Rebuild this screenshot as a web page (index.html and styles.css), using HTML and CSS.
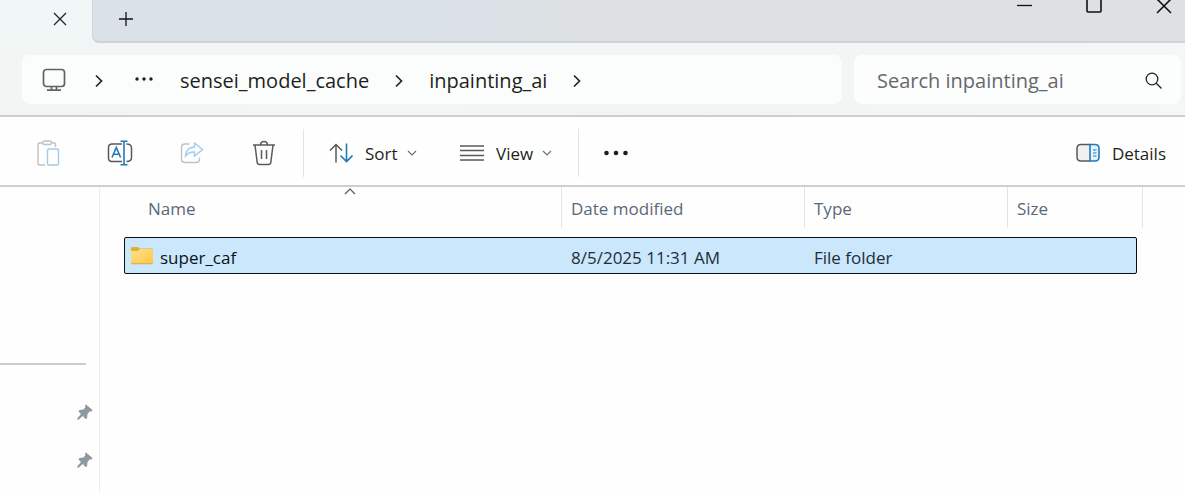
FILE: index.html
```html
<!DOCTYPE html>
<html lang="en">
<head>
<meta charset="utf-8">
<meta name="viewport" content="width=device-width, initial-scale=1">
<title>inpainting_ai</title>
<link rel="stylesheet" href="styles.css">
</head>
<body>
<header class="titlebar">
  <div class="tab">
    <button class="icon-btn" type="button" aria-label="Close tab"><svg width="14" height="14" viewBox="0 0 14 14"><path d="M1 1l12 12M13 1L1 13"/></svg></button>
  </div>
  <div class="strip">
    <button class="icon-btn" type="button" aria-label="New tab"><svg width="16" height="16" viewBox="0 0 16 16"><path d="M8 1v14M1 8h14"/></svg></button>
    <div class="window-controls">
      <button class="icon-btn" type="button" aria-label="Minimize"><svg width="16" height="16" viewBox="0 0 16 16"><path d="M1 7.500h15"/></svg></button>
      <button class="icon-btn" type="button" aria-label="Maximize"><svg class="bold" width="16" height="16" viewBox="0 0 16 16"><rect x="1" y="0" width="14" height="14" rx="1"/></svg></button>
      <button class="icon-btn" type="button" aria-label="Close"><svg class="bold" width="16" height="16" viewBox="0 0 16 16"><path d="M1 1l14 14M15 1L1 15"/></svg></button>
    </div>
  </div>
</header>

<div class="navbar">
  <nav class="address" aria-label="Address">
    <button class="icon-btn pc" type="button" aria-label="This PC"><svg width="24" height="24" viewBox="0 0 24 24"><rect x="1.500" y="1.500" width="21" height="17" rx="3"/><path d="M9.500 19v3M14.500 19v3M5 22.200h14"/></svg></button>
    <svg class="crumb-arrow first" width="8" height="14" viewBox="0 0 8 14"><path d="M1 1.500l5.500 5.500L1 12.500"/></svg>
    <button class="icon-btn dots" type="button" aria-label="More locations"><svg width="18" height="4" viewBox="0 0 18 4"><circle cx="2" cy="2" r="1.700"/><circle cx="9" cy="2" r="1.700"/><circle cx="16" cy="2" r="1.700"/></svg></button>
    <a class="crumb" href="#sensei">sensei_model_cache</a>
    <svg class="crumb-arrow" width="8" height="14" viewBox="0 0 8 14"><path d="M1 1.500l5.500 5.500L1 12.500"/></svg>
    <a class="crumb" href="#inpainting">inpainting_ai</a>
    <svg class="crumb-arrow" width="8" height="14" viewBox="0 0 8 14"><path d="M1 1.500l5.500 5.500L1 12.500"/></svg>
  </nav>
  <form class="search">
    <input type="search" aria-label="Search inpainting_ai" placeholder="Search inpainting_ai">
    <button class="icon-btn" type="button" aria-label="Search"><svg width="18" height="18" viewBox="0 0 18 18"><circle cx="7" cy="7" r="5.800"/><path d="M11.300 11.300l5.200 5.200"/></svg></button>
  </form>
</div>

<div class="toolbar" role="toolbar" aria-label="Commands">
  <button class="tool" type="button" aria-label="Paste" disabled>
    <svg width="24" height="26" viewBox="0 0 24 26"><path class="faint" d="M6.500 3H3.500Q2 3 2 4.500v19Q2 25 3.500 25H9M16 3h2q1.500 0 1.500 1.500V7"/><rect class="faint" x="6.500" y="1" width="9" height="3.500" rx="1.700"/><rect class="faint-blue" x="11.500" y="9" width="11" height="16" rx="1.500"/></svg>
  </button>
  <button class="tool" type="button" aria-label="Rename">
    <svg width="26" height="26" viewBox="0 0 26 26"><path class="grey" d="M15 4H5Q1.500 4 1.500 7.500v10.500Q1.500 21.500 5 21.500h10M19.500 4Q24.500 4 24.500 8v9.500Q24.500 21.500 19.500 21.500"/><path class="blue" d="M5 17.500L9.300 7.500l4.300 10M6.500 14.300h5.600M17 1.500v23M13.500 1.200h7M13.500 24.800h7"/></svg>
  </button>
  <button class="tool" type="button" aria-label="Share" disabled>
    <svg width="24" height="24" viewBox="0 0 24 24"><path class="faint" d="M9.500 3H5Q1.500 3 1.500 6.500V18Q1.500 21.500 5 21.500h11q3.500 0 3.500-3.500v-1.500"/><path class="faint-blue" d="M14.500 2l8 6.500-8 6.500v-4Q9 10.500 5.500 15 6 6.500 14.500 6z"/></svg>
  </button>
  <button class="tool" type="button" aria-label="Delete">
    <svg width="24" height="26" viewBox="0 0 24 26"><path class="grey" d="M1 5h22M8.500 4.500Q9 1.500 12 1.500t3.500 3M3 5l2.200 17.500Q5.500 24.500 7.500 24.500h9Q18.500 24.500 18.800 22.500L21 5M9.500 10v9M14.500 10v9"/></svg>
  </button>
  <span class="divider"></span>
  <button class="menu sort" type="button" aria-haspopup="menu">
    <svg width="24" height="20" viewBox="0 0 24 20"><path class="grey" d="M7 19.500V1.500M1 7.500l6-6 6 6"/><path class="blue" d="M17.500 .5v18M11.500 12.500l6 6 6-6"/></svg>
    <span>Sort</span>
    <svg class="caret" width="10" height="6" viewBox="0 0 10 6"><path d="M1 1l4 4 4-4"/></svg>
  </button>
  <button class="menu view" type="button" aria-haspopup="menu">
    <svg width="24" height="16" viewBox="0 0 24 16"><path class="grey" d="M0 1h24M0 5.500h24M0 10.500h24M0 15h24"/></svg>
    <span>View</span>
    <svg class="caret" width="10" height="6" viewBox="0 0 10 6"><path d="M1 1l4 4 4-4"/></svg>
  </button>
  <span class="divider"></span>
  <button class="icon-btn more" type="button" aria-label="See more"><svg width="24" height="6" viewBox="0 0 24 6"><circle cx="2.500" cy="3" r="2.300"/><circle cx="12" cy="3" r="2.300"/><circle cx="21.500" cy="3" r="2.300"/></svg></button>
  <button class="menu details" type="button">
    <svg width="24" height="20" viewBox="0 0 24 20"><path class="grey pane" d="M14 1.500H5Q1 1.500 1 5.500v8.500Q1 18 5 18h9"/><path class="blue tint" d="M14 1.500h5q4 0 4 4v8.500Q23 18 19 18h-5z"/><path class="blue thin" d="M17 7h3.500M17 10h3.500M17 13h3.500"/></svg>
    <span>Details</span>
  </button>
</div>

<div class="body">
  <aside class="sidebar">
    <hr>
    <svg class="pin" width="16" height="16" viewBox="0 0 16 16"><path d="M9 0.500L15.500 6l-1 1.500h-2L10.500 10l-.5 4.500-1.500 .5L5.800 12 1.500 15.800 0 15.500 .5 14 4 10 1.500 7.500 2.500 6 6.500 5.500 8.200 3.500V1z"/></svg>
    <svg class="pin" width="16" height="16" viewBox="0 0 16 16"><path d="M9 0.500L15.500 6l-1 1.500h-2L10.500 10l-.5 4.500-1.500 .5L5.800 12 1.500 15.800 0 15.500 .5 14 4 10 1.500 7.500 2.500 6 6.500 5.500 8.200 3.500V1z"/></svg>
  </aside>
  <main class="files">
    <table class="list">
      <thead>
        <tr>
          <th class="name" scope="col" aria-sort="ascending">Name<svg class="sorted" width="14" height="7" viewBox="0 0 14 7"><path d="M2 6l5-5 5 5"/></svg></th>
          <th scope="col">Date modified</th>
          <th scope="col">Type</th>
          <th scope="col">Size</th>
        </tr>
      </thead>
      <tbody>
        <tr class="selected">
          <td class="name"><svg class="folder" width="24" height="18" viewBox="0 0 24 18"><defs><linearGradient id="folder" x1="0" y1="0" x2="1" y2="1"><stop offset="0" stop-color="#ffe093"/><stop offset="1" stop-color="#fbc83f"/></linearGradient></defs><path fill="#e0b02f" d="M1 1Q1 0 2 0h5.500L9.500 1.500H22q1 0 1 1V10H1z"/><path fill="url(#folder)" d="M1 4h7l2-2h12q1 0 1 1v13.500q0 .5-.5 .5h-21Q1 17 1 16.500z"/><path fill="#e3b04a" d="M1 16h22q0 1.300-1 1.300H2q-1 0-1-1.300z"/></svg>super_caf</td>
          <td>8/5/2025 11:31 AM</td>
          <td>File folder</td>
          <td></td>
        </tr>
      </tbody>
    </table>
  </main>
</div>
</body>
</html>
```
FILE: styles.css
```css
* { box-sizing: border-box; }

body {
  display: flex;
  flex-direction: column;
  min-height: 100vh;
  margin: 0;
  overflow: hidden;
  background: #fefefe;
  color: #1d1f20;
  font-family: "Open Sans", "Noto Sans", sans-serif;
  font-size: 17px;
}

button {
  display: flex;
  align-items: center;
  justify-content: center;
  margin: 0;
  padding: 0;
  border: 0;
  background: none;
  color: inherit;
  font: inherit;
}

svg {
  flex: none;
  display: block;
  fill: none;
  stroke: #222526;
  stroke-width: 1.3;
}

.titlebar {
  display: flex;
  height: 43px;
  background: #f1f6f6;
}

.tab {
  display: flex;
  width: 92px;
  padding: 7px 20px 12px;
  justify-content: flex-end;
}

.tab .icon-btn { width: 24px; }

.strip {
  display: flex;
  flex: 1;
  align-items: flex-start;
  justify-content: space-between;
  border-bottom: 2px solid #cdd3d6;
  border-left: 1px solid #cdd5da;
  border-bottom-left-radius: 7px;
  background: linear-gradient(90deg, #dae1e8 0, #dae1e8 30%, #dde1e3 45%, #dde1e1 100%);
}

.strip > .icon-btn { width: 24px; height: 24px; margin: 7px 21px; }
.strip svg { stroke: #111; }

.window-controls { display: flex; gap: 54px; margin-right: 13px; margin-top: -3px; }
.window-controls .icon-btn { width: 16px; height: 17px; }
.window-controls .bold { stroke-width: 1.6; }

.navbar {
  display: grid;
  grid-template-columns: minmax(0, 820fr) minmax(0, 327fr);
  gap: 12px;
  height: 74px;
  padding: 12px 4px 11px 22px;
  border-bottom: 2px solid #cbcfd0;
  background: linear-gradient(90deg, #f1f6f5, #f2f5f5 60%, #f5f6f6);
}

.address {
  display: flex;
  align-items: center;
  padding: 2px 0 0 20px;
  border-radius: 8px;
  background: #fbfdfd;
}

.pc svg { stroke: #606365; stroke-width: 1.7; }
.pc { padding-bottom: 2px; }
.crumb-arrow { margin: 0 26px; stroke-width: 1.7; }
.crumb-arrow.first { margin: 0 32px 0 29px; }
.dots { margin-right: 27px; padding-bottom: 4px; }
.dots svg, .more svg { fill: #1b1d1e; stroke: none; }
.crumb { color: inherit; font-size: 20px; text-decoration: none; }

.search {
  display: flex;
  align-items: center;
  padding: 2px 18px 0 23px;
  border-radius: 8px;
  background: #fcfdfd;
}

.search input {
  flex: 1;
  min-width: 0;
  padding: 0;
  border: 0;
  outline: 0;
  background: none;
  color: #1d1f20;
  font: inherit;
  font-size: 20px;
}

.search input::placeholder { color: #66696b; opacity: 1; }

.toolbar {
  display: flex;
  align-items: center;
  height: 70px;
  padding: 4px 19px 0 12px;
  border-bottom: 2px solid #cdd0d1;
}

.toolbar .tool { width: 72px; height: 48px; }
.toolbar .grey { stroke: #57595b; stroke-width: 1.5; }
.toolbar .blue { stroke: #2179b8; stroke-width: 1.6; }
.toolbar .faint { stroke: #bfc1c3; stroke-width: 1.4; }
.toolbar .faint-blue { stroke: #9fcbee; stroke-width: 1.4; }
.toolbar .pane { fill: #f1f1f1; }
.toolbar .tint { fill: #e4f4fd; }
.toolbar .thin { stroke-width: 1.2; }

.divider { width: 1px; height: 48px; margin: 0 0 0 3px; background: #e2e3e4; }

.menu { justify-content: flex-start; gap: 12px; }
.menu span { min-width: 32px; text-align: left; }
.menu .caret { margin-left: -3px; stroke: #6c7072; stroke-width: 1.2; }
.sort { width: 131px; margin-left: 25px; }
.view { width: 115px; }
.more { margin-left: 25px; }
.details { margin-left: auto; }

.body { display: flex; flex: 1; }

.sidebar {
  display: flex;
  flex-direction: column;
  align-items: flex-end;
  width: 100px;
  padding-right: 6px;
  border-right: 1px solid #ededee;
}

.sidebar hr {
  width: 86px;
  height: 2px;
  margin: 176px 7px 39px 0;
  border: 0;
  background: #cbcdce;
}

.pin { margin-bottom: 32px; fill: #8e999f; stroke: none; }

.files { flex: 1; padding: 0 42px 0 24px; }

.list, .list thead, .list tbody { display: block; }

.list tr { display: grid; grid-template-columns: minmax(0, 1fr) 243px 203px 135px; }

.list th, .list td { padding: 0 9px; text-align: left; white-space: nowrap; }

.list th {
  height: 41px;
  border-right: 1px solid #e2e4e6;
  color: #5a6878;
  font-weight: 400;
  line-height: 44px;
}

.list th.name { position: relative; padding-left: 24px; }

.sorted { position: absolute; top: 1px; left: 50%; stroke: #55595c; stroke-width: 1.2; }

.list .selected {
  grid-template-columns: minmax(0, 1fr) 243px 203px 130px;
  margin: 9px 6px 0 0;
  border: 1px solid #0b0f12;
  border-radius: 2px;
  background: #cae7fc;
}

.list td { height: 35px; padding-left: 11px; color: #1f2d38; line-height: 40px; }

.list td.name { display: flex; align-items: flex-start; gap: 6px; padding-left: 5px; color: #0c1216; }

.folder { margin-top: 9px; stroke: none; }
```
